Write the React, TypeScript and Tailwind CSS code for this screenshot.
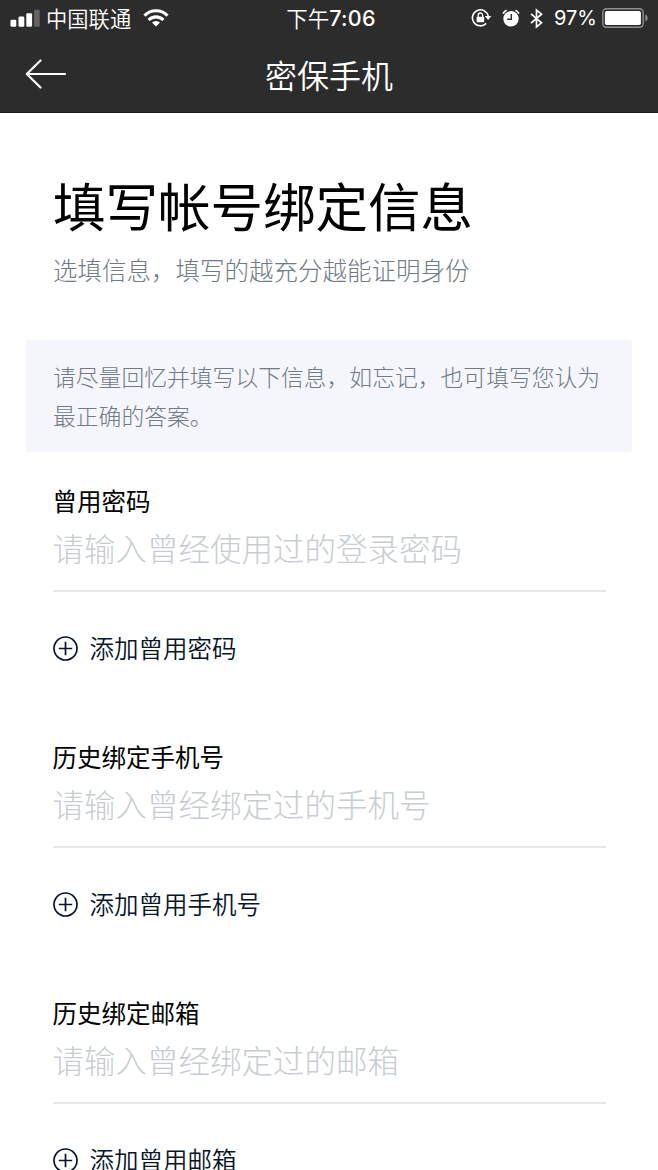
function SignalIcon() {
  return (
    <svg className="h-[19px] w-[30px]" viewBox="0 0 30 19" fill="#fff">
      <rect x="0.5" y="10.7" width="5.8" height="7.1" rx="1.3" />
      <rect x="8.5" y="7.6" width="5.8" height="10.2" rx="1.3" />
      <rect x="16.3" y="4.2" width="5.8" height="13.6" rx="1.3" />
      <rect x="24.1" y="0.8" width="5.6" height="17" rx="1.3" fill="#636363" />
    </svg>
  );
}

function WifiIcon() {
  return (
    <svg className="h-[18px] w-[26px]" viewBox="0 0 26 18" fill="none" stroke="#fff" strokeWidth="3.1">
      <path d="M1.5 6.6a16.2 16.2 0 0 1 23 0" />
      <path d="M5.6 11a10.4 10.4 0 0 1 14.8 0" />
      <path d="M13 17.6 9 13.6a5.7 5.7 0 0 1 8 0z" fill="#fff" stroke="none" />
    </svg>
  );
}

function RotationLockIcon() {
  return (
    <svg className="h-[20px] w-[21px]" viewBox="0 0 21 20" fill="none" stroke="#fff">
      <path d="M17.3 8.4A8 8 0 1 0 15.2 15.4" strokeWidth="1.6" />
      <path d="M13.800 8h6.600l-3.300 4z" fill="#fff" stroke="none" />
      <rect x="5.600" y="8.700" width="7.600" height="5.600" rx="0.700" fill="#fff" stroke="none" />
      <path d="M7.200 9V7.200a2.200 2.200 0 0 1 4.400 0v2" strokeWidth="1.300" />
    </svg>
  );
}

function AlarmIcon() {
  return (
    <svg className="h-[19px] w-[18px]" viewBox="0 0 18 19" fill="none">
      <circle cx="9" cy="9.8" r="7.7" fill="#fff" />
      <path d="M9.3 5v5.2H5.2" stroke="#2c2c2c" strokeWidth="1.4" />
      <path d="M1 4.600A7 7 0 0 1 4.600 1.200M17 4.600a7 7 0 0 0-3.600-3.400" stroke="#fff" strokeWidth="1.600" />
    </svg>
  );
}

function BluetoothIcon() {
  return (
    <svg className="h-[21px] w-[13px]" viewBox="0 0 13 21" fill="none" stroke="#fff" strokeWidth="1.7">
      <path d="m1 5.800 10.500 9L6.500 19V2L11.500 6.200 1 15.200" />
    </svg>
  );
}

function BatteryIcon() {
  return (
    <svg className="h-[20px] w-[47px]" viewBox="0 0 47 20" fill="none">
      <rect x="0.8" y="0.8" width="40.400" height="18.400" rx="3.600" stroke="#8f8f8f" strokeWidth="1.400" />
      <rect x="2.900" y="3" width="36" height="14" rx="1.800" fill="#fff" />
      <path d="M43.400 6.500c3 1 3 6 0 7z" fill="#8f8f8f" />
    </svg>
  );
}

function StatusBar() {
  return (
    <div className="grid h-[36px] grid-cols-[1fr_auto_1fr] items-center text-white">
      <div className="flex items-center pl-[10px]">
        <SignalIcon />
        <span className="ml-[6px] text-[21.3px] font-[350] leading-[34px]">中国联通</span>
        <span className="ml-[12px]"><WifiIcon /></span>
      </div>
      <div className="flex items-center pl-[4px] text-[21.500px] leading-[34px]">
        <span className="font-[350]">下午</span>
        <span className='font-["Inter",sans-serif] text-[21.500px] font-medium tracking-[0.3px]'>7:06</span>
      </div>
      <div className="flex items-center justify-end pr-[9px]">
        <RotationLockIcon />
        <span className="ml-[10px]"><AlarmIcon /></span>
        <span className="ml-[10px]"><BluetoothIcon /></span>
        <span className='ml-[11px] font-["Inter",sans-serif] text-[20px] leading-[36px]'>97%</span>
        <span className="ml-[5px]"><BatteryIcon /></span>
      </div>
    </div>
  );
}

function NavBar() {
  return (
    <div className="grid h-[76px] grid-cols-[1fr_auto_1fr] items-center">
      <button className="pl-[25px]" aria-label="返回">
        <svg className="h-[30px] w-[42px]" viewBox="0 0 42 30" fill="none" stroke="#fff" strokeWidth="2.2" strokeLinecap="round" strokeLinejoin="round">
          <path d="M40 15H2M15.500 1.500 1.800 15l13.700 13.500" />
        </svg>
      </button>
      <h1 className="text-[32px] font-[350] leading-[76px] text-white">密保手机</h1>
    </div>
  );
}

function Field({ label, hint, action }: { label: string; hint: string; action: string }) {
  return (
    <section className="h-[256px] shrink-0 pl-[52.500px] pr-[52px]">
      <label className="block text-[24.500px] leading-[36px] text-black">{label}</label>
      <div className="flex h-[73px] items-start border-b-2 border-[#e8e8e8] pt-[4px] text-[31.500px] font-light leading-[48px] text-[#c8cdd3]">
        {hint}
      </div>
      <button className="mt-[38px] flex items-center text-[24.500px] font-[350] leading-[36px] text-[#081528]">
        <svg className="mr-[12px] h-[25px] w-[25px]" viewBox="0 0 25 25" fill="none" stroke="currentColor" strokeWidth="1.700">
          <circle cx="12.500" cy="12.500" r="11.500" />
          <path d="M12.500 5.800v13.400M5.800 12.500h13.400" />
        </svg>
        {action}
      </button>
    </section>
  );
}

const fields = [
  { label: "曾用密码", hint: "请输入曾经使用过的登录密码", action: "添加曾用密码" },
  { label: "历史绑定手机号", hint: "请输入曾经绑定过的手机号", action: "添加曾用手机号" },
  { label: "历史绑定邮箱", hint: "请输入曾经绑定过的邮箱", action: "添加曾用邮箱" },
];

export default function App() {
  return (
    <div className='flex h-[1170px] w-[658px] flex-col overflow-hidden whitespace-nowrap bg-white font-["Noto_Sans_CJK_SC",sans-serif]'>
      <header className="h-[113px] shrink-0 border-b border-[#1c1c1c] bg-[#2c2c2c]">
        <StatusBar />
        <NavBar />
      </header>
      <main>
        <div className="px-[53px] pt-[55px]">
          <h2 className="text-[52.500px] leading-[72px] text-black">填写帐号绑定信息</h2>
          <p className="mt-[12px] text-[24.500px] font-light leading-[36px] text-[#717a86]">选填信息，填写的越充分越能证明身份</p>
        </div>
        <div className="mx-[26px] mb-[31px] mt-[52px] h-[112px] rounded-[4px] bg-[#f5f6fc] px-[27px] pt-[17px] text-[22.800px] font-light leading-[39px] text-[#717a86]">
          请尽量回忆并填写以下信息，如忘记，也可填写您认为
          <br />
          最正确的答案。
        </div>
        {fields.map((f) => (
          <Field key={f.label} {...f} />
        ))}
      </main>
    </div>
  );
}
